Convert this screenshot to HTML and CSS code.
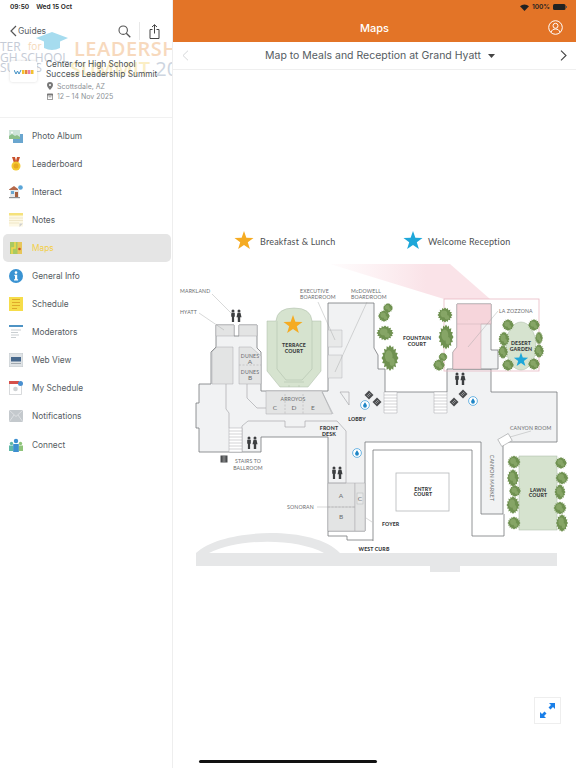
FILE: index.html
```html
<!DOCTYPE html>
<html lang="en">
<head>
  <meta charset="UTF-8">
  <meta name="viewport" content="width=device-width, initial-scale=1.0">
  <title>Maps</title>
  <link rel="stylesheet" href="styles.css">
</head>
<body>
  <aside class="sidebar">
    <div class="banner">
      <svg class="banner-cap" width="32" height="20" viewBox="0 0 32 20"><path d="M16 0 32 6 24 9.5V16Q16 20 8 16V9.5L0 6Z" fill="#a6dcef"/></svg>
      <span class="banner-a">TER</span>
      <span class="banner-for">for</span>
      <span class="banner-b">GH SCHOOL</span>
      <span class="banner-c">SU&nbsp;&nbsp;C&nbsp;&nbsp;S</span>
      <span class="banner-lead">LEADERSH</span>
      <span class="banner-summit">SUMMIT <em>20</em></span>
    </div>

    <div class="status status-left"><b>09:50</b><b>Wed 15 Oct</b></div>

    <div class="guides-bar">
      <svg width="7" height="12" viewBox="0 0 7 12"><path d="M6 1 1 6l5 5" fill="none" stroke="#555" stroke-width="1.2"/></svg>
      <span class="guides-label">Guides</span>
      <svg class="search-icon" width="13" height="13" viewBox="0 0 13 13"><circle cx="5.2" cy="5.2" r="4.2" fill="none" stroke="#555" stroke-width="1.1"/><path d="m8.3 8.3 4 4" stroke="#555" stroke-width="1.3"/></svg>
      <span class="guides-divider"></span>
      <svg class="share-icon" width="11" height="15" viewBox="0 0 11 15"><path d="M3.5 5.5H1v9h9v-9H7.5M5.5 9.5V.8M3 3 5.500.7 8 3" fill="none" stroke="#444" stroke-width="1"/></svg>
    </div>

    <div class="event">
      <div class="event-logo">
        <svg width="20" height="6" viewBox="0 0 20 6"><path d="M0 1 2 5 3.5 2 5 5 7 1" fill="none" stroke="#3f8fc4" stroke-width="1"/><rect x="8" y="1" width="2.5" height="4" fill="#f2c230"/><rect x="11" y="1" width="2.5" height="4" fill="#e9853a"/><rect x="14" y="1" width="2.5" height="4" fill="#e57fb0"/><rect x="17" y="1" width="2.5" height="4" fill="#f2c230"/></svg>
      </div>
      <div class="event-info">
        <div class="event-title">Center for High School Success Leadership Summit</div>
        <div class="event-meta">
          <svg width="6" height="8" viewBox="0 0 6 8"><path d="M3 0a3 3 0 0 1 3 3c0 2-3 5-3 5S0 5 0 3a3 3 0 0 1 3-3Zm0 2a1 1 0 1 0 0 2 1 1 0 0 0 0-2Z" fill="#777"/></svg>
          <span>Scottsdale, AZ</span>
        </div>
        <div class="event-meta">
          <svg width="6" height="7" viewBox="0 0 6 7"><path d="M.4.9h5.2v5.700H.4Z" fill="none" stroke="#777" stroke-width=".8"/><path d="M0 1h6v1.5H0ZM1.5 3.5h3v.8h-3Z" fill="#777"/></svg>
          <span>12 – 14 Nov 2025</span>
        </div>
      </div>
    </div>

    <nav class="nav">
      <a class="nav-item">
        <svg class="nav-icon" viewBox="0 0 14 14"><rect x="4" y="5" width="10" height="9" fill="#6aa6cf"/><rect y="1" width="11" height="9" fill="#cfe4da"/><path d="M0 10V7l3-2 3 2 2-1 3 2v2Z" fill="#8cbf8a"/><circle cx="3" cy="3.5" r="1" fill="#fff"/></svg>
        Photo Album
      </a>
      <a class="nav-item">
        <svg class="nav-icon" viewBox="0 0 14 14"><path d="M3 0h3l1 4 1-4h3L9 6H5Z" fill="#c9502c"/><circle cx="7" cy="9" r="4.500" fill="#f4c92f"/><circle cx="7" cy="9" r="2.500" fill="#e8a91f"/></svg>
        Leaderboard
      </a>
      <a class="nav-item">
        <svg class="nav-icon" viewBox="0 0 14 14"><path d="M0 4.500 5 1l4 3v1H0Z" fill="#b5694a"/><rect x="1" y="5" width="9" height="7" fill="#e6e9ea"/><rect x="2" y="6" width="3" height="3" fill="#6aa6cf"/><rect x="6" y="7" width="3" height="5" fill="#a5603f"/><circle cx="11.5" cy="2.5" r="2.3" fill="#5aa5d8"/><rect y="12" width="11" height="1.2" fill="#8c8f92"/></svg>
        Interact
      </a>
      <a class="nav-item">
        <svg class="nav-icon" viewBox="0 0 14 14"><rect y="1" width="14" height="12.5" fill="#fdf8e4"/><rect width="14" height="2.5" fill="#f5e27c"/><path d="M0 5h14M0 7.500h14M0 10h10" stroke="#ece2c0" stroke-width=".8"/><path d="M14 10.500 10.500 14V10.500Z" fill="#cfcfcf"/></svg>
        Notes
      </a>
      <a class="nav-item active">
        <svg class="nav-icon" viewBox="0 0 14 14"><rect x="1" y="1" width="12" height="12" fill="#a9c961"/><rect x="8.5" y="1" width="4.5" height="12" fill="#e8c65a"/><path d="M3 13V7h3V1" fill="none" stroke="#f4d84c" stroke-width="1.5"/><circle cx="10.5" cy="8" r="1.3" fill="#c9502c"/></svg>
        Maps
      </a>
      <a class="nav-item">
        <svg class="nav-icon" viewBox="0 0 14 14"><circle cx="7" cy="7" r="7" fill="#3a93d2"/><circle cx="7" cy="3.6" r="1.3" fill="#fff"/><path d="M5.400 5.800h2.800v4.400h.9v1.200H5v-1.200h1V7H5.400Z" fill="#fff"/></svg>
        General Info
      </a>
      <a class="nav-item">
        <svg class="nav-icon" viewBox="0 0 14 14"><rect width="14" height="14" fill="#f6dd4a"/><path d="M3 2.500h8M3 5.500h8M3 8.500h8M3 11.500h5" stroke="#dfa92a" stroke-width="1.1"/></svg>
        Schedule
      </a>
      <a class="nav-item">
        <svg class="nav-icon" viewBox="0 0 14 14"><rect width="14" height="2" fill="#4e93c4"/><path d="M2 5h10M2 7.500h7M2 10h8M2 12.500h5" stroke="#c3c8cc" stroke-width=".9"/></svg>
        Moderators
      </a>
      <a class="nav-item">
        <svg class="nav-icon" viewBox="0 0 14 14"><rect width="14" height="14" fill="#dfe3e6" stroke="#b9bec2" stroke-width=".6"/><rect x="2" y="4" width="10" height="4.5" fill="#47688c"/><path d="M2 10.500h10" stroke="#a3aab0"/></svg>
        Web View
      </a>
      <a class="nav-item">
        <svg class="nav-icon" viewBox="0 0 14 14"><rect x=".5" y="1" width="12" height="12.5" fill="#fff" stroke="#cfd2d4" stroke-width=".8"/><rect width="10" height="3" fill="#d6504a"/><circle cx="6.5" cy="8" r="2.3" fill="#cfd2d4"/><circle cx="11.5" cy="2.5" r="2.5" fill="#4a90d0"/></svg>
        My Schedule
      </a>
      <a class="nav-item">
        <svg class="nav-icon" viewBox="0 0 14 12"><rect width="14" height="12" fill="#c4c9cd"/><path d="M0 0 7 6.500 14 0M0 12 5 5M14 12 9 5" fill="none" stroke="#e8eaec" stroke-width=".7"/></svg>
        Notifications
      </a>
      <a class="nav-item">
        <svg class="nav-icon" viewBox="0 0 14 14"><circle cx="2.500" cy="5.500" r="1.700" fill="#5fb8a8"/><rect y="7.500" width="4.500" height="5.500" fill="#5fb8a8"/><circle cx="11.500" cy="5.500" r="1.700" fill="#8fc47a"/><rect x="9.500" y="7.500" width="4.500" height="5.500" fill="#8fc47a"/><circle cx="7" cy="3" r="2.200" fill="#3c8fd0"/><rect x="4.200" y="6" width="5.600" height="8" fill="#3c8fd0"/></svg>
        Connect
      </a>
    </nav>
  </aside>

  <main class="main">
    <header class="app-bar">
      <div class="status status-right">
        <svg width="9" height="7" viewBox="0 0 9 7"><path d="M4.500 7 0 2.300a6.400 6.400 0 0 1 9 0Z" fill="#222"/></svg>
        <b>100%</b>
        <svg width="14" height="6" viewBox="0 0 14 6"><rect width="12.500" height="6" rx="1.500" fill="#222"/><rect x="13" y="2" width="1" height="2" fill="#555"/></svg>
      </div>
      <div class="app-title-row">
        <span></span>
        <h1 class="app-title">Maps</h1>
        <svg class="profile-icon" width="15" height="15" viewBox="0 0 15 15"><circle cx="7.500" cy="7.500" r="6.800" fill="none" stroke="#fff" stroke-width="1"/><circle cx="7.500" cy="5.800" r="2.500" fill="none" stroke="#fff" stroke-width="1"/><path d="M3 12.300c.6-2.200 2.400-3.300 4.500-3.300s3.900 1.100 4.500 3.300" fill="none" stroke="#fff" stroke-width="1"/></svg>
      </div>
    </header>

    <div class="map-bar">
      <svg width="7" height="11" viewBox="0 0 7 11"><path d="M6 .7 1 5.500l5 4.800" fill="none" stroke="#d5d7d9" stroke-width="1"/></svg>
      <div class="map-name">
        Map to Meals and Reception at Grand Hyatt
        <svg width="7" height="4" viewBox="0 0 7 4"><path d="M0 0h7L3.500 4Z" fill="#444"/></svg>
      </div>
      <svg width="7" height="11" viewBox="0 0 7 11"><path d="m1 .7 5 4.800-5 4.800" fill="none" stroke="#444" stroke-width="1.100"/></svg>
    </div>

    <svg class="map" width="403" height="698" viewBox="173 70 403 698">
      <defs>
        <polygon id="star" points="0,-10 2.350,-3.240 9.510,-3.090 3.800,1.240 5.880,8.090 0,4 -5.880,8.090 -3.800,1.240 -9.510,-3.090 -2.350,-3.240"/>
        <g id="bush">
          <polygon class="bush-dark" points="10,0 8,2 9.200,3.900 6.400,4.300 7.100,7.100 4.300,6.400 3.800,9.200 2,8 0,10 -2,8 -3.800,9.200 -4.300,6.400 -7.100,7.100 -6.400,4.300 -9.200,3.800 -8,2 -10,0 -8,-2 -9.200,-3.800 -6.400,-4.300 -7.100,-7.100 -4.300,-6.400 -3.800,-9.200 -2,-8 0,-10 2,-8 3.800,-9.200 4.300,-6.400 7.100,-7.100 6.400,-4.300 9.200,-3.800 8,-2"/>
          <circle class="bush-light" cx="-1.500" cy="-1.500" r="4.500"/>
          <circle class="bush-light" cx="2.500" cy="3" r="3"/>
        </g>
        <g id="wc">
          <circle cx="-3" cy="-5" r="1.500"/><path d="M-4.800-3.200h3.600v4h-.7V6h-2.200V.8h-.7Z"/>
          <circle cx="3" cy="-5" r="1.500"/><path d="M1.500-3.200h3l1 4.500H4.200V6H1.800V1.300H.5Z"/>
        </g>
        <g id="drop">
          <circle class="drop-ring" r="4.400"/>
          <path class="drop-fill" d="M0-2.800C1 -1.300 1.900-.4 1.900.8a1.900 1.900 0 0 1-3.800 0C-1.900-.4-1-1.300 0-2.800Z"/>
        </g>
        <g id="sign">
          <rect class="sign" x="-3.200" y="-3.200" width="6.400" height="6.400" transform="rotate(45)"/>
          <path class="sign-mark" d="M-1.200-1.500h2.200M-1.200 0h2.200M-1.200 1.500h2.200" transform="rotate(45)"/>
        </g>
        <linearGradient id="wedge" x1="0" x2="1" y1="0" y2="0">
          <stop offset="0" stop-color="#fbe6ea" stop-opacity="0.1"/>
          <stop offset="0.6" stop-color="#fae3e8"/>
        </linearGradient>
      </defs>

      <!-- legend -->
      <use href="#star" class="star-gold" transform="translate(244 241)"/>
      <text class="legend" x="260" y="244.500">Breakfast &amp; Lunch</text>
      <use href="#star" class="star-blue" transform="translate(413 241)"/>
      <text class="legend" x="428" y="244.500">Welcome Reception</text>

      <!-- pink callout -->
      <polygon points="330,264 450,264 490,299 444,299" fill="url(#wedge)"/>

      <!-- curb -->
      <path class="curb" d="M196 553C222 528 314 525 340 553H430 557V566H460V572H430V566H196Z"/>
      <path class="white-fill" d="M209 553C240 538 296 538 324 553Z"/>

      <!-- floor -->
      <path class="floor" d="M199 452V428H196V403H199V384H211V352L216 347V325H234V336H239V325H257V348L261 352V391H328V303H374V348L378 355V369H385V392H447V369H491V392H557V442H503V514H481V442H365V531H328V437H261V452Z"/>

      <!-- rooms -->
      <path class="room" d="M216 325H234V336H216ZM239 325H257V336H239Z"/>
      <path class="room" d="M212 384V352L217 347H233V384Z"/>
      <path class="room" d="M239 384V347H251L261 356V384Z"/>
      <path class="room-line dashed" d="M239 365H261"/>
      <path class="room" d="M266 391H322L332 414H266Z"/>
      <path class="room-line dashed" d="M285 394V414M303 394V414"/>
      <path class="room-plain" d="M328 330H342V347H328ZM328 355H342V378H328Z"/>
      <path class="room" d="M328 483H355V531H328Z"/>
      <path class="room" d="M355 483H365V531H355Z"/>
      <rect class="room-plain" x="357" y="493" width="6" height="11"/>
      <path class="room-line dashed" d="M328 507H355"/>

      <!-- walls inside the floor -->
      <path class="thin" d="M242 452V426L248 421H285V427H305V421H337L346 431V483H328M226 384V409L229 413V428M247 384V398L257 408H266M340 392H349V405ZM322 392 333 414"/>
      <path class="stairs" d="M229 428H242V452H229ZM229 431H242M229 434H242M229 437H242M229 440H242M229 443H242M229 446H242M229 449H242"/>
      <path class="stairs" d="M384 392H397V413H384ZM384 395H397M384 398H397M384 401H397M384 404H397M384 407H397M384 410H397"/>
      <path class="stairs" d="M434 392H447V413H434ZM434 395H447M434 398H447M434 401H447M434 404H447M434 407H447M434 410H447"/>

      <!-- courtyard outlines -->
      <path class="wall" d="M373 541V450H472V536H504V514"/>
      <path class="wall" d="M328 531V536H347V540H373"/>
      <rect class="court" x="396" y="473" width="53" height="38"/>

      <!-- la zozzona -->
      <path class="floor" d="M453 369V352L457 347V304H491V350H498V369Z"/>
      <path class="pink-room" d="M457 304H491V324H481V369H453V352L457 347Z"/>
      <path class="pink-line" d="M457 324H491"/>
      <rect class="pink-frame" x="444" y="299" width="95" height="72"/>

      <!-- terrace court -->
      <path class="garden" d="M267 321H276Q277 308 294 308Q311 308 312 321H321V371L308 387H280L267 371Z"/>
      <path class="garden-line" d="M277 321V369L286 380H302L312 369V321M284 382H304M289 385V387M299 385V387"/>
      <use href="#star" class="star-gold" transform="translate(293 325)"/>

      <!-- gardens -->
      <ellipse class="garden" cx="521" cy="346" rx="15" ry="24"/>
      <rect class="garden" x="519" y="456" width="38" height="74"/>

      <!-- bushes -->
      <use href="#bush" transform="translate(388 308) scale(.5)"/>
      <use href="#bush" transform="translate(384 316) scale(.6)"/>
      <use href="#bush" transform="translate(385 333) scale(.85 .75)"/>
      <use href="#bush" transform="translate(390 358) scale(.85 1.3)"/>
      <use href="#bush" transform="translate(445 315) scale(.75)"/>
      <use href="#bush" transform="translate(446 337) scale(.75 1.25)"/>
      <use href="#bush" transform="translate(443 357) scale(.45)"/>
      <use href="#bush" transform="translate(439 365) scale(.6)"/>
      <use href="#bush" transform="translate(508 325) scale(.6)"/>
      <use href="#bush" transform="translate(504 339) scale(.55 .75)"/>
      <use href="#bush" transform="translate(503 352) scale(.5 .7)"/>
      <use href="#bush" transform="translate(508 365) scale(.6)"/>
      <use href="#bush" transform="translate(534 325) scale(.6)"/>
      <use href="#bush" transform="translate(539 338) scale(.4 .65)"/>
      <use href="#bush" transform="translate(539 351) scale(.5 .7)"/>
      <use href="#bush" transform="translate(534 364) scale(.6)"/>
      <use href="#bush" transform="translate(514 462) scale(.65)"/>
      <use href="#bush" transform="translate(513 478) scale(.6 .9)"/>
      <use href="#bush" transform="translate(515 491) scale(.6)"/>
      <use href="#bush" transform="translate(513 505) scale(.65 .9)"/>
      <use href="#bush" transform="translate(514 523) scale(.65)"/>
      <use href="#bush" transform="translate(561 463) scale(.6)"/>
      <use href="#bush" transform="translate(562 478) scale(.65)"/>
      <use href="#bush" transform="translate(560 492) scale(.55 .8)"/>
      <use href="#bush" transform="translate(560 508) scale(.65)"/>
      <use href="#bush" transform="translate(562 523) scale(.6 .9)"/>
      <use href="#star" class="star-blue" transform="translate(521 360) scale(.75)"/>

      <!-- icons on the plan -->
      <use href="#wc" class="wc" transform="translate(236 316)"/>
      <use href="#wc" class="wc" transform="translate(252 443)"/>
      <use href="#wc" class="wc" transform="translate(337 473)"/>
      <use href="#wc" class="wc" transform="translate(460 379)"/>
      <use href="#drop" transform="translate(365 405)"/>
      <use href="#drop" transform="translate(357 453)"/>
      <use href="#drop" transform="translate(473 401)"/>
      <use href="#sign" transform="translate(369 395)"/>
      <use href="#sign" transform="translate(377 402)"/>
      <use href="#sign" transform="translate(454 402)"/>
      <use href="#sign" transform="translate(463 394)"/>
      <rect class="sign" x="220.500" y="455.500" width="7" height="7"/>
      <path class="sign-mark" d="M222.500 457H225.500M222.500 459H225.500M222.500 461H225.500"/>
      <rect class="canyon-box" x="499" y="436" width="12" height="8" transform="rotate(-30 505 440)"/>

      <!-- leader lines -->
      <path class="leader" d="M212 294 232 314M199 313 224 330M318 302 335 340M367 302 335 372M498 311 468 347M510 437 531 431M317 507H355M372 522 366 518"/>

      <!-- labels -->
      <text class="lbl" x="180" y="292.500">MARKLAND</text>
      <text class="lbl" x="180" y="313.500">HYATT</text>
      <text class="lbl" x="300" y="292.500">EXECUTIVE</text>
      <text class="lbl" x="300" y="298.500">BOARDROOM</text>
      <text class="lbl" x="351" y="292.500">McDOWELL</text>
      <text class="lbl" x="351" y="298.500">BOARDROOM</text>
      <text class="lbl-b mid" x="294" y="347">TERRACE</text>
      <text class="lbl-b mid" x="294" y="353">COURT</text>
      <text class="lbl mid" x="250" y="358">DUNES</text>
      <text class="lbl-big mid" x="250" y="364">A</text>
      <text class="lbl mid" x="250" y="374">DUNES</text>
      <text class="lbl-big mid" x="250" y="380">B</text>
      <text class="lbl mid" x="293" y="401">ARROYOS</text>
      <text class="lbl-big mid" x="275" y="409.500">C</text>
      <text class="lbl-big mid" x="294" y="409.500">D</text>
      <text class="lbl-big mid" x="313" y="409.500">E</text>
      <text class="lbl-b mid" x="417" y="340">FOUNTAIN</text>
      <text class="lbl-b mid" x="417" y="346">COURT</text>
      <text class="lbl" x="499" y="312.500">LA ZOZZONA</text>
      <text class="lbl-b mid" x="521" y="345">DESERT</text>
      <text class="lbl-b mid" x="521" y="351">GARDEN</text>
      <text class="lbl-b mid" x="357" y="420.500">LOBBY</text>
      <text class="lbl-b mid" x="329" y="430">FRONT</text>
      <text class="lbl-b mid" x="329" y="435.500">DESK</text>
      <text class="lbl" x="510" y="430">CANYON ROOM</text>
      <text class="lbl mid" x="248" y="463">STAIRS TO</text>
      <text class="lbl mid" x="248" y="470">BALLROOM</text>
      <text class="lbl" x="287" y="509">SONORAN</text>
      <text class="lbl-big mid" x="341" y="497.500">A</text>
      <text class="lbl-big mid" x="341" y="519">B</text>
      <text class="lbl-big mid" x="360" y="501">C</text>
      <text class="lbl-b mid" x="423" y="490.500">ENTRY</text>
      <text class="lbl-b mid" x="423" y="496">COURT</text>
      <text class="lbl-b" x="382" y="525.500">FOYER</text>
      <text class="lbl-b mid" x="374" y="550.500">WEST CURB</text>
      <text class="lbl mid" transform="translate(490 478) rotate(90)">CANYON MARKET</text>
      <text class="lbl-b mid" x="538" y="491.500">LAWN</text>
      <text class="lbl-b mid" x="538" y="497">COURT</text>
    </svg>

    <button class="expand-btn">
      <svg width="15" height="15" viewBox="0 0 15 15"><path d="M9 0h6v6l-2-2-2.500 2.500-2-2L11 2ZM6 15H0V9l2 2 2.500-2.500 2 2L4 13Z" fill="#1a7fe8"/></svg>
    </button>
  </main>

  <div class="home-bar"></div>
</body>
</html>
```

FILE: styles.css
```css
* {
  box-sizing: border-box;
}

body {
  margin: 0;
  width: 576px;
  height: 768px;
  display: flex;
  overflow: hidden;
  background: #fff;
  font-family: Inter, "Liberation Sans", sans-serif;
  color: #555c62;
}

/* Sidebar */
.sidebar {
  position: relative;
  width: 173px;
  height: 768px;
  flex: none;
  overflow: hidden;
  border-right: 1px solid #eeeeee;
}

.banner {
  position: absolute;
  top: 0;
  left: 0;
  width: 172px;
  height: 80px;
  overflow: hidden;
  font-family: "Open Sans", sans-serif;
}

.banner span {
  position: absolute;
  white-space: nowrap;
  line-height: 1;
}

.banner-cap {
  position: absolute;
  left: 36px;
  top: 32px;
}

.banner-a {
  left: 0;
  top: 41px;
  font-size: 12px;
  color: #c5cbd6;
}

.banner-for {
  left: 28px;
  top: 41px;
  font-size: 10px;
  color: #f5d8b8;
}

.banner-b {
  left: 0;
  top: 52px;
  font-size: 12px;
  color: #c5cbd6;
}

.banner-c {
  left: 0;
  top: 62px;
  font-size: 12px;
  color: #c5cbd6;
}

.banner-lead {
  left: 74px;
  top: 39px;
  font-size: 20px;
  font-weight: 600;
  letter-spacing: 0.5px;
  color: #f7d9bd;
}

.banner-summit {
  left: 70px;
  top: 59px;
  font-size: 20px;
  font-weight: 600;
  color: #fbeec4;
}

.banner-summit em {
  font-style: normal;
  font-weight: 400;
  color: #cdd5e0;
}

.status {
  display: flex;
  align-items: center;
  font-size: 6.6px;
  color: #222;
}

.status b {
  font-weight: 600;
}

.status-left {
  position: relative;
  height: 14px;
  padding-left: 10px;
  gap: 7px;
}

.guides-bar {
  position: relative;
  display: flex;
  align-items: center;
  height: 34px;
  padding: 0 12px 0 10px;
}

.guides-label {
  margin-left: 1px;
  font-size: 8.5px;
  color: #555c62;
}

.search-icon {
  margin-left: auto;
}

.guides-divider {
  width: 1px;
  height: 18px;
  margin: 0 9px 0 8px;
  background: #e8e8e8;
}

.event {
  position: relative;
  display: flex;
  gap: 9px;
  height: 70px;
  padding: 11px 0 0 10px;
  border-bottom: 1px solid #f1f1f1;
}

.event-logo {
  display: flex;
  align-items: center;
  justify-content: center;
  width: 27px;
  height: 21px;
  margin-top: 2px;
  background: #fff;
  border-radius: 2px;
  box-shadow: 0 0 3px rgba(0, 0, 0, 0.15);
}

.event-title {
  width: 118px;
  font-size: 8.3px;
  line-height: 10px;
  color: #4c5257;
  margin-bottom: 2px;
}

.event-meta {
  display: flex;
  align-items: center;
  gap: 4px;
  height: 10px;
  padding-left: 1px;
  font-size: 7px;
  color: #8d9296;
}

.nav {
  position: relative;
  display: grid;
  grid-auto-rows: 28.1px;
  padding: 3.5px 1px 0 3px;
}

.nav-item {
  display: flex;
  align-items: center;
  gap: 9px;
  padding-left: 6px;
  border-radius: 5px;
  font-size: 8.3px;
  color: #555c62;
}

.nav-item.active {
  background: #e5e5e5;
  color: #f3cf45;
}

.nav-icon {
  width: 14px;
  height: 14px;
  flex: none;
}

/* Main */
.main {
  position: relative;
  flex: 1;
  display: flex;
  flex-direction: column;
}

.app-bar {
  height: 42px;
  flex: none;
  background: #e37427;
}

.status-right {
  justify-content: flex-end;
  gap: 3px;
  height: 14px;
  padding-right: 9px;
}

.app-title-row {
  display: grid;
  grid-template-columns: 1fr auto 1fr;
  align-items: center;
  height: 27px;
  padding: 0 13px;
}

.app-title {
  margin: 0;
  font-size: 11px;
  font-weight: 500;
  color: #fff;
}

.profile-icon {
  justify-self: end;
}

.map-bar {
  display: flex;
  align-items: center;
  justify-content: space-between;
  height: 28px;
  flex: none;
  padding: 0 9px 0 9px;
  border-bottom: 1px solid #efefef;
}

.map-name {
  display: flex;
  align-items: center;
  gap: 7px;
  padding-left: 11px;
  font-size: 10.5px;
  color: #555c62;
}

.map {
  display: block;
  flex: none;
}

/* Map drawing */
.legend {
  font-family: Lato, sans-serif;
  font-size: 9px;
  letter-spacing: 0.2px;
  fill: #4d4f52;
}

.star-gold {
  fill: #f5ab22;
}

.star-blue {
  fill: #1ea7d9;
}

.curb {
  fill: #e6e7e8;
}

.white-fill {
  fill: #fff;
}

.floor {
  fill: #f1f2f3;
  stroke: #77797b;
  stroke-width: 0.8;
}

.room {
  fill: #e3e4e4;
  stroke: #a9abad;
  stroke-width: 0.5;
}

.room-plain {
  fill: #e8e9e9;
  stroke: #b5b7b9;
  stroke-width: 0.5;
}

.room-line {
  fill: none;
  stroke: #a9abad;
  stroke-width: 0.5;
}

.dashed {
  stroke-dasharray: 2 1.5;
}

.thin {
  fill: none;
  stroke: #a9abad;
  stroke-width: 0.7;
}

.stairs {
  fill: #fff;
  stroke: #a5a7a9;
  stroke-width: 0.5;
}

.wall {
  fill: none;
  stroke: #77797b;
  stroke-width: 0.8;
}

.court {
  fill: none;
  stroke: #b5b7b9;
  stroke-width: 0.8;
}

.pink-room {
  fill: #f6d5db;
  stroke: #b9a6aa;
  stroke-width: 0.5;
}

.pink-line {
  stroke: #c9b0b5;
  stroke-width: 0.5;
}

.pink-frame {
  fill: none;
  stroke: #e8b9c4;
  stroke-width: 0.8;
}

.garden {
  fill: #d6e3cf;
  stroke: #a8b8a4;
  stroke-width: 0.5;
}

.garden-line {
  fill: none;
  stroke: #a8b8a4;
  stroke-width: 0.5;
}

.bush-dark {
  fill: #6f9150;
}

.bush-light {
  fill: #86a566;
}

.wc {
  fill: #3d3f41;
}

.drop-ring {
  fill: #fff;
  stroke: #4aa3dc;
  stroke-width: 0.8;
}

.drop-fill {
  fill: #1f86c6;
}

.sign {
  fill: #4a4c4e;
}

.sign-mark {
  fill: none;
  stroke: #fff;
  stroke-width: 0.5;
}

.canyon-box {
  fill: #fff;
  stroke: #8e9092;
  stroke-width: 0.5;
}

.leader {
  fill: none;
  stroke: #9c9ea0;
  stroke-width: 0.4;
}

.lbl,
.lbl-b,
.lbl-big {
  font-family: Lato, sans-serif;
}

.lbl {
  font-size: 5.2px;
  letter-spacing: 0.15px;
  fill: #6a6c6e;
}

.lbl-b {
  font-size: 5.2px;
  font-weight: 900;
  letter-spacing: 0.15px;
  fill: #36383a;
}

.lbl-big {
  font-size: 6.5px;
  fill: #6a6c6e;
}

.mid {
  text-anchor: middle;
}

/* Floating controls */
.expand-btn {
  position: absolute;
  top: 697px;
  left: 361px;
  display: flex;
  align-items: center;
  justify-content: center;
  width: 27px;
  height: 27px;
  padding: 0;
  background: #fff;
  border: 1px solid #eeeeee;
}

.home-bar {
  position: absolute;
  top: 760px;
  left: 199px;
  width: 178px;
  height: 3px;
  background: #111;
  border-radius: 2px;
}
```
